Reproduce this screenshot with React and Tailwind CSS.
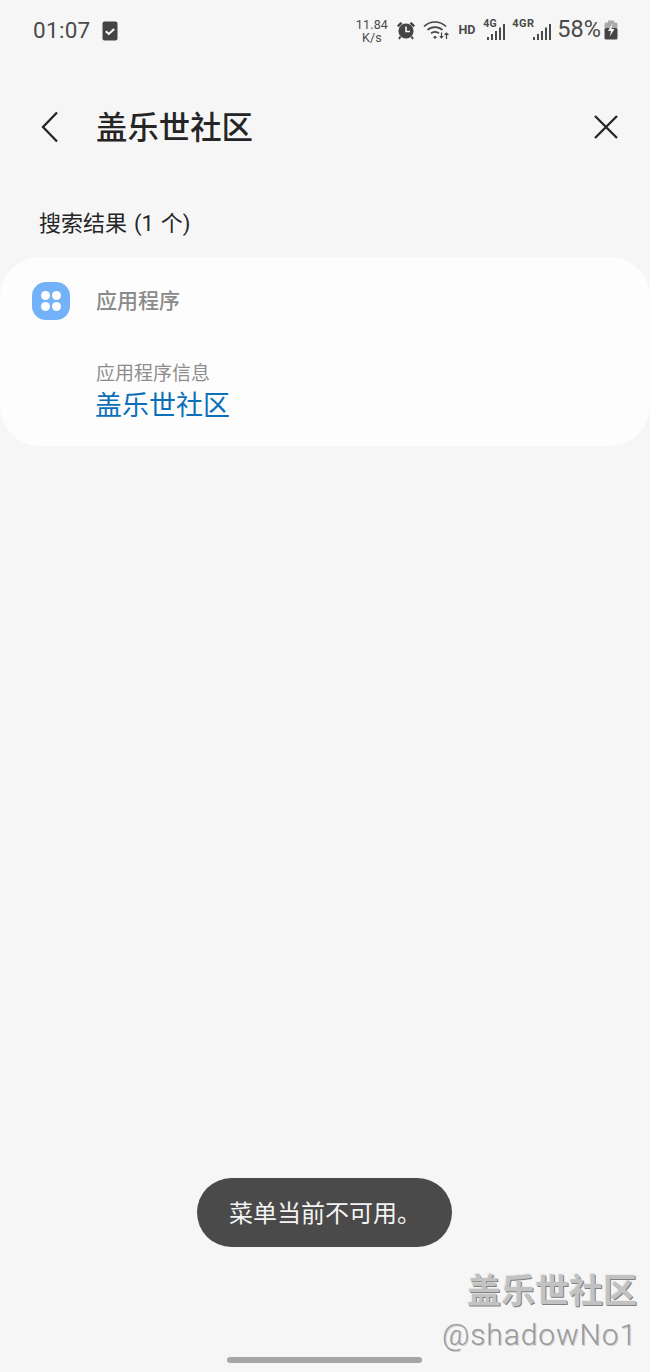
const cjk = "font-['Roboto','Noto_Sans_CJK_SC',sans-serif]";

function SignalBars({ className = "" }) {
  return (
    <svg width="20" height="16" viewBox="0 0 20 16" className={className} fill="#4a4a4a">
      <rect x="1" y="13" width="2" height="3" />
      <rect x="5" y="10" width="2" height="6" />
      <rect x="9" y="7" width="2" height="9" />
      <rect x="13" y="3.5" width="2" height="12.5" />
      <rect x="17" y="0" width="2" height="16" />
    </svg>
  );
}

function StatusBar() {
  return (
    <div className="h-[60px] flex items-center justify-between pl-[33px] pr-[32px] text-[#4a4a4a]">
      <div className="flex items-center gap-[11px]">
        <span className="text-[22.5px] tracking-[0.3px] font-['Roboto',sans-serif] mt-[1px]">01:07</span>
        <svg width="16" height="20" viewBox="0 0 16 20" className="mt-[1px]">
          <rect x="0.5" y="0.5" width="15" height="19" rx="2" fill="#444" />
          <path d="M3.8 10.2l3 2.8 5.4-5" fill="none" stroke="#fff" strokeWidth="2" />
        </svg>
      </div>
      <div className="flex items-center font-['Roboto',sans-serif]">
        <div className="flex flex-col items-center text-[12.5px] leading-[13px] w-[33px] mt-[2px] tracking-[0.2px]">
          <span>11.84</span>
          <span>K/s</span>
        </div>
        <svg width="20" height="20" viewBox="0 0 20 20" className="ml-[8px]" fill="#444">
          <circle cx="10" cy="11" r="7.6" />
          <path d="M1 5.5 4.5 2 6.5 3.4 2.6 7.2zM19 5.5 15.5 2 13.5 3.4 17.4 7.2z" />
          <path d="M10 6.5V11.5H14" fill="none" stroke="#f6f6f6" strokeWidth="1.6" />
          <path d="M4.5 16.5 3 19M15.5 16.5 17 19" stroke="#444" strokeWidth="2" />
        </svg>
        <svg width="27" height="22" viewBox="0 0 27 22" className="ml-[7px]" fill="none" stroke="#444" strokeWidth="1.7">
          <path d="M1 7.5C7 1.5 17 1.5 23 7.5" />
          <path d="M4.5 11C8.5 7.2 15.5 7.2 19.5 11" />
          <path d="M8 14.3C10.2 12.4 13.8 12.4 16 14.3" />
          <circle cx="12" cy="18.3" r="1.4" fill="#444" stroke="none" />
          <path d="M18.5 13.5V19M16.8 17.2 18.5 19 20.2 17.2" strokeWidth="1.2" />
          <path d="M23.5 20V14M21.6 16 23.5 14 25.4 16" strokeWidth="1.2" />
        </svg>
        <span className="ml-[8px] text-[12.5px] font-bold">HD</span>
        <div className="ml-[8px] relative w-[22px] h-[22px]">
          <span className="absolute left-0 top-[-1px] text-[10.5px] font-bold leading-[12px]">4G</span>
          <SignalBars className="absolute left-[3px] top-[5px]" />
        </div>
        <div className="ml-[7px] relative w-[40px] h-[22px]">
          <span className="absolute left-0 top-[-1px] text-[11px] font-bold leading-[12px] tracking-[0.4px]">4GR</span>
          <SignalBars className="absolute left-[20px] top-[5px]" />
        </div>
        <span className="ml-[5px] text-[23.5px] leading-none">58%</span>
        <svg width="14" height="20" viewBox="0 0 14 20" className="ml-[3px]">
          <rect x="4" y="0.5" width="6" height="3" fill="#aaa" />
          <rect x="0.5" y="2.5" width="13" height="6" rx="1.5" fill="#aaa" />
          <rect x="0.5" y="8" width="13" height="11.5" rx="1.5" fill="#444" />
          <path d="M8.5 3.5 4 11H7L5.8 16.5 10.5 9H7.5z" fill="#f6f6f6" />
        </svg>
      </div>
    </div>
  );
}

export default function App() {
  return (
    <div className={`relative w-[650px] h-[1372px] bg-[#f6f6f6] overflow-hidden flex flex-col ${cjk}`}>
      <StatusBar />

      <div className="h-[134px] flex items-center justify-between pl-[41px] pr-[31px]">
        <div className="flex items-center">
          <svg width="17" height="32" viewBox="0 0 17 32" fill="none" stroke="#252525" strokeWidth="2.3">
            <path d="M16 1.5 2 16 16 30.5" />
          </svg>
          <h1 className="ml-[38px] text-[31.4px] font-medium text-[#252525] leading-none mt-[3px]">盖乐世社区</h1>
        </div>
        <svg width="26" height="26" viewBox="0 0 26 26" fill="none" stroke="#252525" strokeWidth="2.3">
          <path d="M2 2 24 24M24 2 2 24" />
        </svg>
      </div>

      <div className="h-[63px] pl-[39px] text-[22px] leading-[60px] text-[#252525] [word-spacing:1.5px]">搜索结果 (1 个)</div>

      <div className="h-[189px] rounded-[40px] bg-[#fdfdfd] pl-[32px] pt-[25px]">
        <div className="flex items-center h-[38px]">
          <div className="w-[38px] h-[38px] rounded-[14px] bg-[#73b2f8] grid grid-cols-[9px_9px] gap-[2px] place-content-center">
            <span className="w-[9px] h-[9px] rounded-full bg-[#fdfdfd]" />
            <span className="w-[9px] h-[9px] rounded-full bg-[#fdfdfd]" />
            <span className="w-[9px] h-[9px] rounded-full bg-[#fdfdfd]" />
            <span className="w-[9px] h-[9px] rounded-full bg-[#fdfdfd]" />
          </div>
          <span className="ml-[26px] text-[21px] font-medium text-[#8a8a8a] mt-[1px]">应用程序</span>
        </div>
        <div className="pl-[64px] mt-[41px]">
          <div className="text-[19px] leading-[25px] text-[#8d8d8d]">应用程序信息</div>
          <div className="-ml-px text-[27px] leading-[40px] text-[#0c70b9]">盖乐世社区</div>
        </div>
      </div>

      <div className="flex-1 flex flex-col items-center justify-end">
        <div className="h-[69px] w-[255px] mr-[1px] rounded-full bg-[#4a4a4a] flex items-center pl-[32px] pt-[2px] text-[24px] text-[#f4f4f4] mb-[125px]">
          菜单当前不可用。
        </div>
      </div>

      <div className="absolute right-[13px] bottom-[17px] flex flex-col items-end text-[#c2c2c2]">
        <span className="text-[34px] font-bold leading-[44px] mb-[2px] [text-shadow:1px_1px_0_#808080,-1px_-1px_0_#ececec]">盖乐世社区</span>
        <span className="text-[30px] leading-[40px] tracking-[0.9px] font-['Roboto',sans-serif] font-light text-[#9a9a9a] [text-shadow:1px_1px_0_#d0d0d0]">@shadowNo1</span>
      </div>

      <div className="absolute left-[227px] bottom-[9px] w-[195px] h-[6px] rounded-full bg-[#a6a6a6]" />
    </div>
  );
}
